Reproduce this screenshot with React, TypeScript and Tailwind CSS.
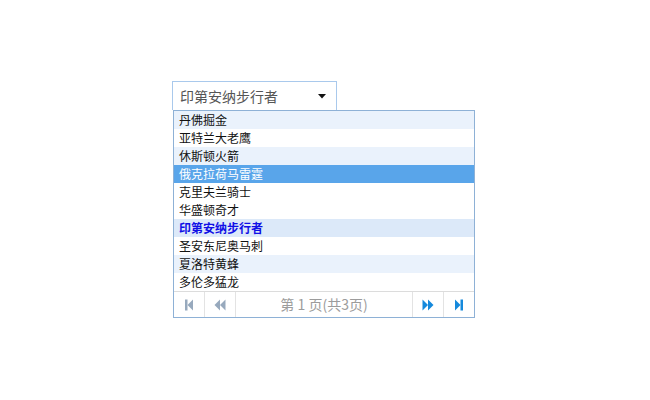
import React from "react";

const teams = [
	"丹佛掘金",
	"亚特兰大老鹰",
	"休斯顿火箭",
	"俄克拉荷马雷霆",
	"克里夫兰骑士",
	"华盛顿奇才",
	"印第安纳步行者",
	"圣安东尼奥马刺",
	"夏洛特黄蜂",
	"多伦多猛龙",
];

const striped = [0, 2, 8];

function App() {
	const value = "印第安纳步行者";
	const hover = 3;

	return (
		<main
			className="w-[650px] h-[400px] bg-white pt-[81px] pl-[172px]"
			style={{ fontFamily: '"Microsoft YaHei", "Noto Sans CJK SC", sans-serif' }}
		>
			{/* Select box */}
			<div className="w-[165px] h-[29px] border border-b-0 border-[#a9c9ec] flex items-center justify-between pl-[7px] pr-[10px]">
				<span className="text-[14px] text-[#555]">{value}</span>
				<svg width="8" height="5" viewBox="0 0 8 5">
					<path d="M0 0 L8 0 L4 4.5 Z" fill="#111" />
				</svg>
			</div>

			{/* Dropdown panel */}
			<div className="w-[302px] ml-px border border-[#8eb1d6] bg-white">
				{teams.map((t, i) => {
					let cls = "bg-white text-[#111]";
					if (i === hover) cls = "bg-[#59a5ea] text-white";
					else if (t === value) cls = "bg-[#dce9f9] text-[#1010e6] font-bold";
					else if (striped.includes(i)) cls = "bg-[#eaf2fc] text-[#111]";
					return (
						<div
							key={t}
							className={`h-[18px] leading-[18px] pl-[5px] text-[12px] ${cls}`}
						>
							{t}
						</div>
					);
				})}

				{/* Pager */}
				<div className="h-[26px] border-t border-[#dcdcdc] flex items-stretch bg-white">
					<div className="w-[31px] border-r border-[#e3e3e3] flex items-center justify-center">
						<svg width="10" height="12" viewBox="0 0 10 12">
							<rect x="1" y="0.5" width="2.5" height="11" fill="#97a9bd" />
							<path d="M9 0.5 L9 11.5 L3.5 6 Z" fill="#97a9bd" />
						</svg>
					</div>
					<div className="w-[31px] border-r border-[#e3e3e3] flex items-center justify-center">
						<svg width="12" height="12" viewBox="0 0 12 12">
							<path d="M6 0.5 L6 11.5 L0.5 6 Z" fill="#97a9bd" />
							<path d="M11.5 0.5 L11.5 11.5 L6 6 Z" fill="#97a9bd" />
						</svg>
					</div>
					<div className="flex-1 flex items-center justify-center text-[14px] text-[#9c9c9c]">
						第 1 页(共3页)
					</div>
					<div className="w-[31px] border-l border-[#e3e3e3] flex items-center justify-center">
						<svg width="12" height="12" viewBox="0 0 12 12">
							<path d="M0.5 0.5 L0.5 11.5 L6 6 Z" fill="#1589dc" />
							<path d="M6 0.5 L6 11.5 L11.5 6 Z" fill="#1589dc" />
						</svg>
					</div>
					<div className="w-[31px] border-l border-[#e3e3e3] flex items-center justify-center">
						<svg width="10" height="12" viewBox="0 0 10 12">
							<path d="M1 0.5 L1 11.5 L6.5 6 Z" fill="#1589dc" />
							<rect x="6.5" y="0.5" width="2.5" height="11" fill="#1589dc" />
						</svg>
					</div>
				</div>
			</div>
		</main>
	);
}

export default App;
